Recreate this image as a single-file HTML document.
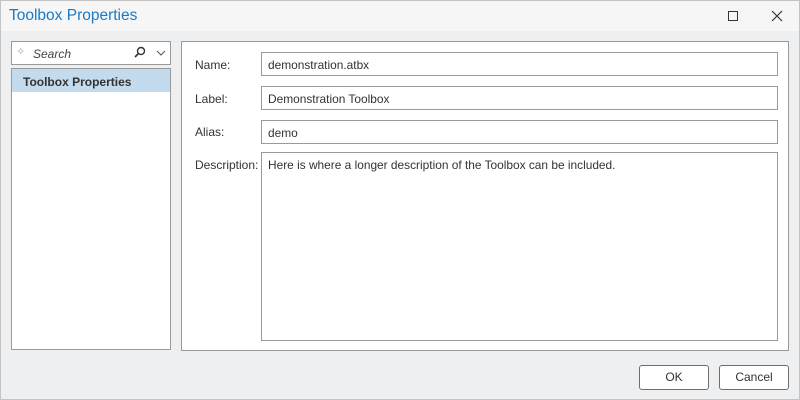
<html><head><style>
body{margin:0;width:800px;height:400px;font-family:"Liberation Sans",sans-serif;overflow:hidden}
.win{position:absolute;left:0;top:0;width:798px;height:398px;border:1px solid #c4c4c4;background:#eeeff1}
.tb{position:absolute;left:0;top:0;width:798px;height:30px;background:#f5f6f5}
.t{position:absolute;left:8px;top:6px;font-size:15.5px;color:#1a7ac5}
.a{position:absolute;box-sizing:border-box}
.box{background:#fff;border:1px solid #9a9a9a}
.lbl{position:absolute;left:194px;font-size:12px;color:#333}
.inp{position:absolute;left:260px;width:517px;height:24px;box-sizing:border-box;background:#fff;border:1px solid #9a9a9a;font-size:11.9px;color:#333;padding:5px 0 0 6px}
.btn{position:absolute;top:364px;width:70px;height:25px;box-sizing:border-box;border:1px solid #6e6e6e;border-radius:3px;background:#fff;font-size:12px;color:#333;text-align:center;line-height:23px}
</style></head><body><div class="win">
<div class="tb"><div class="t">Toolbox Properties</div>
<div class="a" style="left:727px;top:10px;width:10px;height:10px;border:1px solid #333"></div>
<svg class="a" style="left:770px;top:9px" width="12" height="12"><path d="M1 1L11 11M11 1L1 11" stroke="#333" stroke-width="1.2"/></svg></div>
<div class="a box" style="left:10px;top:40px;width:160px;height:24px"><span style="position:absolute;left:4px;top:3px;color:#aaa;font-size:11px">✧</span><span style="position:absolute;left:21px;top:5px;font-size:12px;font-style:italic;color:#444">Search</span>
<svg class="a" style="left:121px;top:4px" width="14" height="14"><circle cx="8" cy="5" r="3.5" fill="none" stroke="#333" stroke-width="1.4"/><path d="M5.5 7.5L2 11" stroke="#333" stroke-width="1.6"/></svg>
<svg class="a" style="left:144px;top:8px" width="10" height="6"><path d="M1 1L5 5L9 1" fill="none" stroke="#555"/></svg></div>
<div class="a box" style="left:10px;top:67px;width:160px;height:282px"><div style="background:#c4daed;height:23px;font-size:12px;font-weight:bold;color:#333;padding:6px 0 0 11px;box-sizing:border-box">Toolbox Properties</div></div>
<div class="a box" style="left:180px;top:40px;width:608px;height:310px"></div>
<div class="lbl" style="top:57px">Name:</div><div class="inp" style="top:51px">demonstration.atbx</div>
<div class="lbl" style="top:91px">Label:</div><div class="inp" style="top:85px">Demonstration Toolbox</div>
<div class="lbl" style="top:124px">Alias:</div><div class="inp" style="top:119px">demo</div>
<div class="lbl" style="top:157px">Description:</div><div class="inp" style="top:151px;height:189px">Here is where a longer description of the Toolbox can be included.</div>
<div class="btn" style="left:638px">OK</div><div class="btn" style="left:718px">Cancel</div>
</div></body></html>
